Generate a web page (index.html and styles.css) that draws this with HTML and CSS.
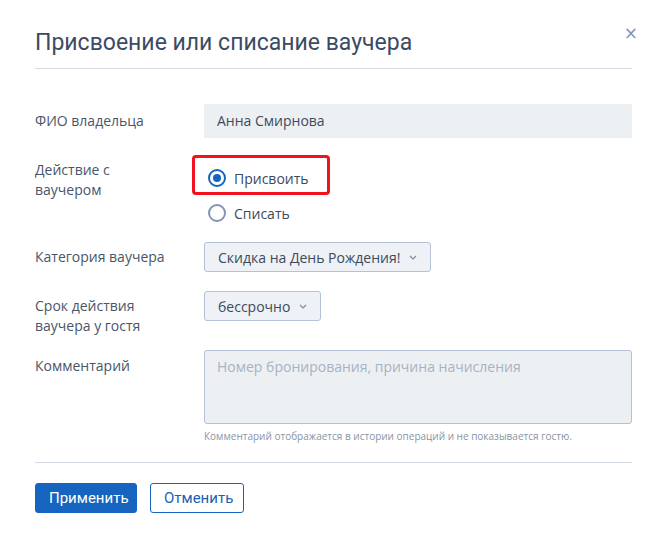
FILE: index.html
```html
<!DOCTYPE html>
<html lang="ru">

<head>
    <meta charset="UTF-8" />
    <meta name="viewport" content="width=device-width, initial-scale=1.0" />
    <title>Ваучер</title>
    <link rel="stylesheet" href="styles.css">
</head>

<body>
    <div class="modal">
        <div class="modal-head">
            <h1 class="modal-title">Присвоение или списание ваучера</h1>
            <span class="close">&times;</span>
        </div>

        <div class="form">
            <div class="row">
                <div class="label">ФИО владельца</div>
                <div class="field">
                    <div class="readonly">Анна Смирнова</div>
                </div>
            </div>

            <div class="row">
                <div class="label label-top">Действие с<br>ваучером</div>
                <div class="field radios">
                    <div class="radio-wrap highlight">
                        <span class="radio checked"></span>
                        <span>Присвоить</span>
                    </div>
                    <div class="radio-wrap">
                        <span class="radio"></span>
                        <span>Списать</span>
                    </div>
                </div>
            </div>

            <div class="row">
                <div class="label label-select">Категория ваучера</div>
                <div class="field">
                    <div class="select">Скидка на День Рождения!
                        <svg class="chevron" width="8" height="5" viewBox="0 0 8 5"><path d="M1 1l3 3 3-3" fill="none" stroke="#7a8aa3" stroke-width="1.1"/></svg>
                    </div>
                </div>
            </div>

            <div class="row row-tight">
                <div class="label label-select">Срок действия<br>ваучера у гостя</div>
                <div class="field">
                    <div class="select">бессрочно
                        <svg class="chevron" width="8" height="5" viewBox="0 0 8 5"><path d="M1 1l3 3 3-3" fill="none" stroke="#7a8aa3" stroke-width="1.1"/></svg>
                    </div>
                </div>
            </div>

            <div class="row">
                <div class="label label-comment">Комментарий</div>
                <div class="field">
                    <textarea class="comment" placeholder="Номер бронирования, причина начисления"></textarea>
                    <p class="hint">Комментарий отображается в истории операций и не показывается гостю.</p>
                </div>
            </div>
        </div>

        <div class="modal-foot">
            <button class="btn btn-primary">Применить</button>
            <button class="btn btn-outline">Отменить</button>
        </div>
    </div>
</body>

</html>
```

FILE: styles.css
```css
body {
    margin: 0;
    padding: 0;
    background: #fff;
    font-family: "Open Sans", "Noto Sans", Arial, sans-serif;
    color: #3c4a5e;
}

.modal {
    width: 670px;
    height: 548px;
    box-sizing: border-box;
    padding: 0 38px 0 35px;
}

.modal-head {
    display: flex;
    justify-content: space-between;
    align-items: flex-start;
    border-bottom: 1px solid #d3dae3;
    padding-top: 28px;
    height: 40px;
}

.modal-title {
    margin: 0;
    font-family: Roboto, Arial, sans-serif;
    font-weight: 400;
    font-size: 23px;
    line-height: 30px;
    color: #3c4a62;
}

.close {
    font-family: "DejaVu Sans", sans-serif;
    font-size: 17px;
    line-height: 14px;
    color: #8196b8;
    margin-right: -6px;
    margin-top: -2px;
}

.form {
    padding-top: 35px;
}

.row {
    display: flex;
    margin-bottom: 19px;
}

.row-tight {
    margin-bottom: 14px;
}

.label {
    width: 169px;
    flex-shrink: 0;
    font-size: 14px;
    line-height: 20px;
    color: #4a5668;
    padding-top: 7px;
}

.label-top {
    padding-top: 3px;
}

.label-select {
    padding-top: 5px;
}

.label-comment {
    padding-top: 6px;
}

.field {
    flex: 1;
}

.readonly {
    background: #edf0f3;
    height: 34px;
    line-height: 34px;
    padding: 0 13px;
    font-size: 14px;
    color: #3c4a5e;
}

.radios {
    display: flex;
    flex-direction: column;
    margin-left: -12px;
    margin-top: -2px;
    margin-bottom: -7px;
}

.radio-wrap {
    display: flex;
    align-items: center;
    gap: 8px;
    height: 40px;
    box-sizing: border-box;
    padding: 6px 0 0 13px;
    font-size: 14px;
    color: #3c4a5e;
    border: 3px solid transparent;
    width: 138px;
}

.radio-wrap.highlight {
    border-color: #f0121c;
    border-radius: 4px;
}

.radio-wrap + .radio-wrap {
    margin-top: -5px;
}

.radio {
    width: 18px;
    height: 18px;
    border: 2px solid #8295b4;
    border-radius: 50%;
    box-sizing: border-box;
    position: relative;
    flex-shrink: 0;
}

.radio.checked {
    border-color: #1565c0;
}

.radio.checked::after {
    content: "";
    position: absolute;
    left: 3px;
    top: 3px;
    width: 8px;
    height: 8px;
    border-radius: 50%;
    background: #1565c0;
}

.select {
    display: inline-flex;
    align-items: center;
    gap: 9px;
    height: 30px;
    box-sizing: border-box;
    padding: 0 13px 0 13px;
    background: #eef1f5;
    border: 1px solid #b5c2d6;
    border-radius: 3px;
    font-size: 14px;
    color: #3c4a5e;
}

.chevron {
    margin-top: 1px;
}

.comment {
    display: block;
    width: 100%;
    height: 74px;
    box-sizing: border-box;
    background: #edf0f3;
    border: 1px solid #b5c2d6;
    border-radius: 3px;
    padding: 6px 12px;
    font-family: "Open Sans", "Noto Sans", Arial, sans-serif;
    font-size: 14px;
    resize: none;
}

.comment::placeholder {
    color: #a7b3c4;
}

.hint {
    margin: 5px 0 0;
    font-size: 10px;
    line-height: 14px;
    color: #8a94a3;
}

.modal-foot {
    border-top: 1px solid #d3dae3;
    padding-top: 20px;
    display: flex;
    gap: 13px;
}

.btn {
    height: 30px;
    font-family: Roboto, Arial, sans-serif;
    font-size: 15px;
    border-radius: 3px;
    padding: 0 13px;
    cursor: pointer;
}

.btn-primary {
    background: #1565c0;
    border: 1px solid #1565c0;
    color: #fff;
    width: 102px;
}

.btn-outline {
    background: #fff;
    border: 1px solid #1565c0;
    color: #1e5fb0;
    width: 94px;
}
```
